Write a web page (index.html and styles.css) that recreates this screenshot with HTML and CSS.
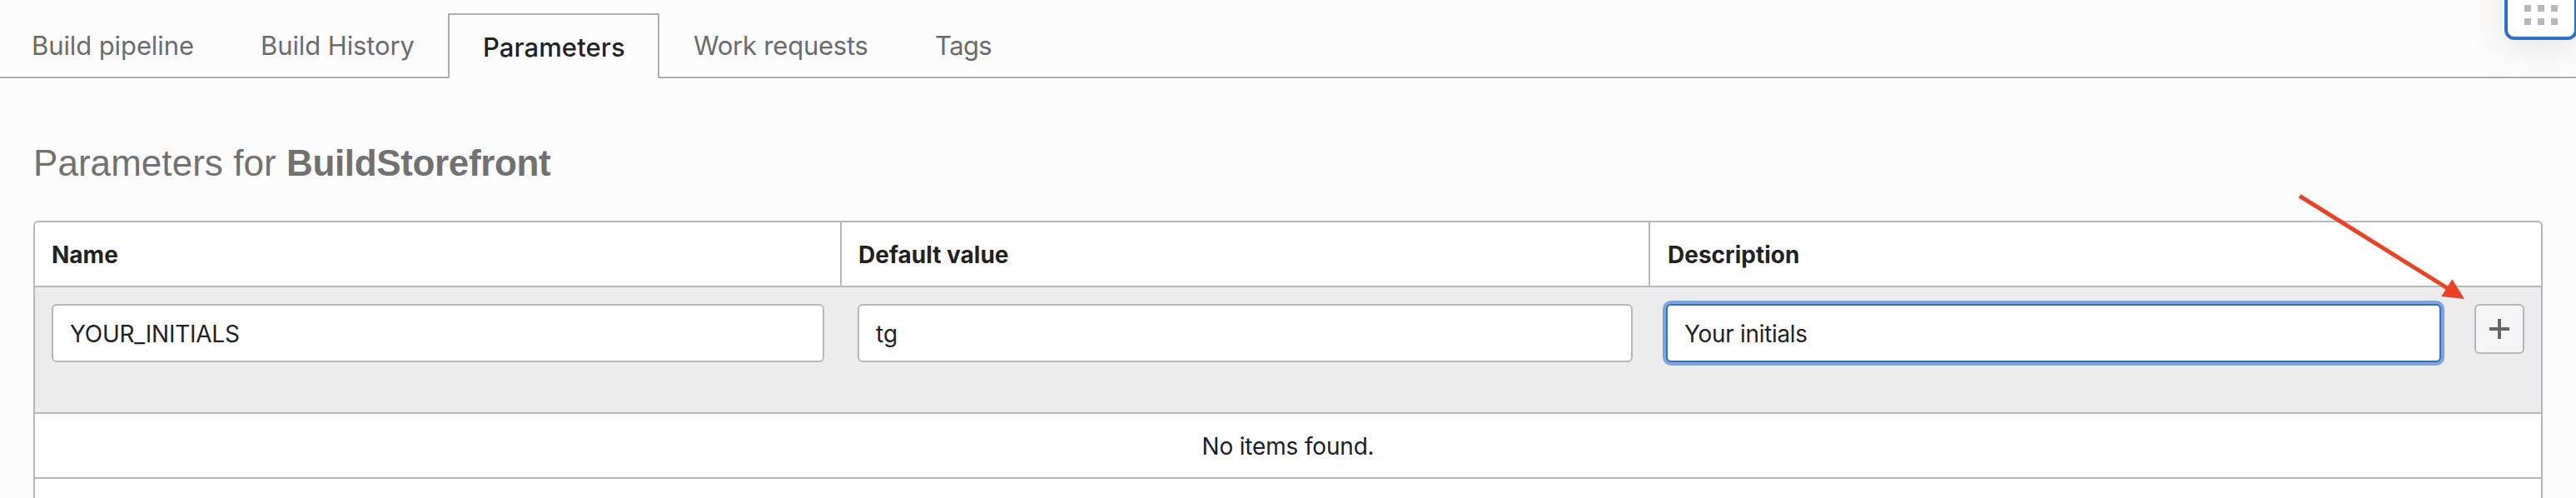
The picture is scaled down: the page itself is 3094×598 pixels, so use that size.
FILE: index.html
```html
<!DOCTYPE html>
<html lang="en">
<head>
<meta charset="utf-8">
<title>Parameters for BuildStorefront</title>
<link rel="stylesheet" href="styles.css">
</head>
<body>
<nav class="tabs">
  <a class="tab tab-pipeline">Build pipeline</a>
  <a class="tab tab-history">Build History</a>
  <a class="tab tab-active">Parameters</a>
  <a class="tab tab-requests">Work requests</a>
  <a class="tab tab-tags">Tags</a>
</nav>
<main class="content">
  <h1 class="title">Parameters for <strong class="title-name">BuildStorefront</strong></h1>
  <section class="table">
    <div class="row head">
      <div class="cell">Name</div>
      <div class="cell">Default value</div>
      <div class="cell">Description</div>
    </div>
    <div class="row edit">
      <div class="field"><input class="input input-name" type="text" value="YOUR_INITIALS" aria-label="Name"></div>
      <div class="field"><input class="input" type="text" value="tg" aria-label="Default value"></div>
      <div class="field field-last">
        <input class="input input-focused" type="text" value="Your initials" aria-label="Description">
        <button class="add" type="button" aria-label="Add">
          <svg class="plus" width="24" height="24" viewBox="0 0 24 24"><path d="M10 0h4v10h10v4H14v10h-4V14H0v-4h10z" fill="#666"/></svg>
        </button>
      </div>
    </div>
    <div class="empty">No items found.</div>
    <div class="footer"></div>
  </section>
</main>
<div class="launcher">
  <svg width="40" height="24" viewBox="0 0 40 24" fill="#b3b8be"><path d="M0 0h8v8H0zM16 0h8v8h-8zM32 0h8v8h-8zM0 16h8v8H0zM16 16h8v8h-8zM32 16h8v8h-8z"/></svg>
</div>
<svg class="arrow" width="200" height="126" viewBox="0 0 200 126">
  <path d="M2 2.3 181 114" stroke="#ec4125" stroke-width="5" fill="none"/>
  <path d="M200 126 185.3 102.3 172.3 123z" fill="#ec4125"/>
</svg>
</body>
</html>
```
FILE: styles.css
```css
* { box-sizing: border-box; }
body {
  margin: 0;
  height: 598px;
  position: relative;
  overflow: hidden;
  background: #fcfcfc;
  color: #222;
  font-family: Inter, "Liberation Sans", sans-serif;
}
.tabs {
  display: flex;
  height: 94px;
  padding-top: 16px;
  font-size: 31px;
  line-height: 38px;
  color: #6b6b6b;
  background: linear-gradient(#aeaeae, #aeaeae) bottom / 100% 2px no-repeat;
}
.tab { padding-top: 20px; white-space: nowrap; letter-spacing: -0.1px; }
.tab-pipeline { width: 272px; padding-left: 38px; }
.tab-history { width: 266px; padding-left: 41px; }
.tab-active {
  width: 254px;
  padding-left: 40px;
  border: 2px solid #aeaeae;
  border-bottom: 0;
  background: #fcfcfc;
  color: #222;
  font-weight: 500;
  letter-spacing: 0.1px;
}
.tab-requests { width: 290px; padding-left: 41px; letter-spacing: -0.22px; }
.tab-tags { padding-left: 41px; letter-spacing: -0.6px; }
.content { padding: 76px 40px 0; }
.title {
  margin: 0 0 43px;
  font: 400 44px/52px "Liberation Sans", sans-serif;
  letter-spacing: 0.05px;
  color: #717171;
}
.title-name { font-weight: 700; letter-spacing: -0.35px; }
.table {
  border: 2px solid #b3b8be;
  border-bottom: 0;
  border-radius: 6px 6px 0 0;
  background: #fff;
  font-size: 28px;
  line-height: 36px;
}
.row {
  display: grid;
  border-bottom: 2px solid #b3b8be;
}
.head {
  height: 78px;
  grid-template-columns: 967px 971px 1fr;
  font-weight: 700;
}
.cell { padding: 21px 0 0 20px; }
.cell + .cell { border-left: 2px solid #b3b8be; }
.cell:last-child { padding-left: 21px; }
.edit {
  height: 152px;
  grid-template-columns: 968px 971px 1fr;
  background: #ececec;
}
.field { padding: 20px 20px 0; }
.field-last { display: flex; gap: 40px; align-items: flex-start; }
.input {
  display: block;
  width: 100%;
  height: 70px;
  margin: 0;
  padding: 2px 20px 0;
  border: 2px solid #b3b8be;
  border-radius: 6px;
  background: #fff;
  color: #222;
  font: 400 28px/36px Inter, sans-serif;
}
.input-name { letter-spacing: -0.25px; }
.input-focused {
  flex: 1;
  border-color: #2f70c8;
  box-shadow: 0 0 0 4px #7fa3dc;
  letter-spacing: -0.32px;
}
.add {
  flex: none;
  display: flex;
  align-items: center;
  justify-content: center;
  width: 60px;
  height: 60px;
  padding: 0;
  border: 2px solid #b3b8be;
  border-radius: 6px;
  background: #f5f5f5;
}
.empty {
  height: 78px;
  padding-top: 21px;
  border-bottom: 2px solid #b3b8be;
  text-align: center;
  color: #1b2026;
  letter-spacing: -0.17px;
}
.footer { height: 40px; }
.launcher {
  position: absolute;
  top: -40px;
  right: -2px;
  width: 88px;
  height: 88px;
  padding: 42px 0 0 20px;
  border: 4px solid #2f70c8;
  border-radius: 12px;
  background: #fff;
  box-shadow: 0 8px 48px rgba(0, 0, 0, 0.1);
}
.launcher svg { display: block; }
.arrow { position: absolute; left: 2760px; top: 233px; }
```
